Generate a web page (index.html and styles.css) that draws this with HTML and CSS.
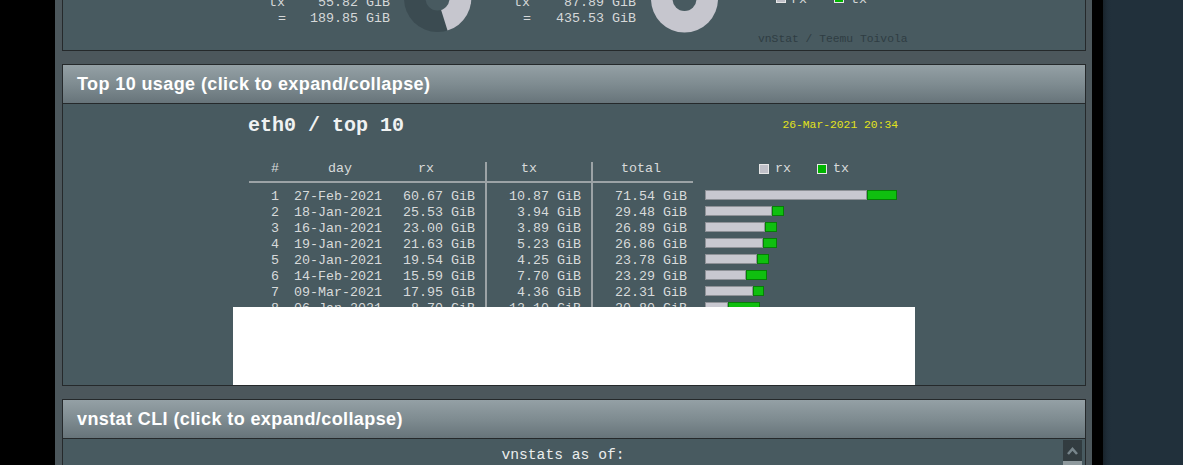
FILE: index.html
```html
<!DOCTYPE html>
<html lang="en">
<head>
<meta charset="utf-8">
<title>vnStat</title>
<link rel="stylesheet" href="styles.css">
</head>
<body>
<div class="frame">
  <div class="gutter"></div>
  <main class="page">
    <section class="panel panel-cut">
      <div class="panel-body body-summary">
        <svg class="summary" width="682" height="50" viewBox="0 0 682 50">
          <g class="sum-text">
            <text x="36" y="6">tx</text>
            <text x="157" y="6" text-anchor="end">55.82 GiB</text>
            <text x="45" y="22">=</text>
            <text x="157" y="22" text-anchor="end">189.85 GiB</text>
            <text x="281" y="6">tx</text>
            <text x="403" y="6" text-anchor="end">87.89 GiB</text>
            <text x="290" y="22">=</text>
            <text x="403" y="22" text-anchor="end">435.53 GiB</text>
            <text x="558" y="3">rx</text>
            <text x="618" y="3">tx</text>
          </g>
          <circle cx="204.5" cy="-1.5" r="33.5" fill="#3b4b51"/>
          <path d="M204.5 -1.5 L198.7 -34.5 A33.5 33.5 0 0 1 214.5 30.5 Z" fill="#c6c6ce"/>
          <circle cx="204.5" cy="-1.5" r="12" fill="#485a60"/>
          <circle cx="451.5" cy="-1" r="33.5" fill="#c6c6ce"/>
          <circle cx="451.5" cy="-1" r="12" fill="#485a60"/>
          <rect x="543.5" y="-6.5" width="9" height="9" fill="#c0c0c8" stroke="#e6e6e6"/>
          <rect x="601.5" y="-6.5" width="9" height="9" fill="#00b400" stroke="#e6e6e6"/>
          <text class="credit" x="525" y="42">vnStat / Teemu Toivola</text>
        </svg>
      </div>
    </section>

    <section class="panel">
      <h2 class="panel-head">Top 10 usage (click to expand/collapse)</h2>
      <div class="panel-body body-top">
        <div class="chart">
          <div class="chart-title">
            <span class="iface">eth0 / top 10</span>
            <span class="stamp">26-Mar-2021 20:34</span>
          </div>
          <div class="trow thead">
            <span class="c-n">#</span>
            <span class="c-day">day</span>
            <span class="c-rx">rx</span>
            <span class="c-tx">tx</span>
            <span class="c-tot">total</span>
            <span class="c-bar legend"><i class="key key-rx"></i>rx<i class="key key-tx"></i>tx</span>
          </div>
          <div class="rule"></div>
          <div class="trow first">
            <span class="c-n">1</span><span class="c-day">27-Feb-2021</span><span class="c-rx">60.67 GiB</span><span class="c-tx">10.87 GiB</span><span class="c-tot">71.54 GiB</span>
            <span class="c-bar"><i class="bar-rx" style="width:162px"></i><i class="bar-tx" style="width:30px"></i></span>
          </div>
          <div class="trow">
            <span class="c-n">2</span><span class="c-day">18-Jan-2021</span><span class="c-rx">25.53 GiB</span><span class="c-tx">3.94 GiB</span><span class="c-tot">29.48 GiB</span>
            <span class="c-bar"><i class="bar-rx" style="width:67px"></i><i class="bar-tx" style="width:12px"></i></span>
          </div>
          <div class="trow">
            <span class="c-n">3</span><span class="c-day">16-Jan-2021</span><span class="c-rx">23.00 GiB</span><span class="c-tx">3.89 GiB</span><span class="c-tot">26.89 GiB</span>
            <span class="c-bar"><i class="bar-rx" style="width:60px"></i><i class="bar-tx" style="width:12px"></i></span>
          </div>
          <div class="trow">
            <span class="c-n">4</span><span class="c-day">19-Jan-2021</span><span class="c-rx">21.63 GiB</span><span class="c-tx">5.23 GiB</span><span class="c-tot">26.86 GiB</span>
            <span class="c-bar"><i class="bar-rx" style="width:58px"></i><i class="bar-tx" style="width:14px"></i></span>
          </div>
          <div class="trow">
            <span class="c-n">5</span><span class="c-day">20-Jan-2021</span><span class="c-rx">19.54 GiB</span><span class="c-tx">4.25 GiB</span><span class="c-tot">23.78 GiB</span>
            <span class="c-bar"><i class="bar-rx" style="width:52px"></i><i class="bar-tx" style="width:12px"></i></span>
          </div>
          <div class="trow">
            <span class="c-n">6</span><span class="c-day">14-Feb-2021</span><span class="c-rx">15.59 GiB</span><span class="c-tx">7.70 GiB</span><span class="c-tot">23.29 GiB</span>
            <span class="c-bar"><i class="bar-rx" style="width:41px"></i><i class="bar-tx" style="width:21px"></i></span>
          </div>
          <div class="trow">
            <span class="c-n">7</span><span class="c-day">09-Mar-2021</span><span class="c-rx">17.95 GiB</span><span class="c-tx">4.36 GiB</span><span class="c-tot">22.31 GiB</span>
            <span class="c-bar"><i class="bar-rx" style="width:48px"></i><i class="bar-tx" style="width:11px"></i></span>
          </div>
          <div class="trow">
            <span class="c-n">8</span><span class="c-day">06-Jan-2021</span><span class="c-rx">8.70 GiB</span><span class="c-tx">12.10 GiB</span><span class="c-tot">20.80 GiB</span>
            <span class="c-bar"><i class="bar-rx" style="width:23px"></i><i class="bar-tx" style="width:32px"></i></span>
          </div>
        </div>
        <div class="unloaded"></div>
      </div>
    </section>

    <section class="panel">
      <h2 class="panel-head">vnstat CLI (click to expand/collapse)</h2>
      <div class="panel-body body-cli">
        <pre class="cli">vnstats as of:</pre>
        <div class="vscroll">
          <div class="vbtn">
            <svg width="11" height="8" viewBox="0 0 11 8"><polyline points="1,7 5.5,2 10,7" fill="none" stroke="#77858b" stroke-width="2.6"/></svg>
          </div>
          <div class="vthumb"></div>
        </div>
      </div>
    </section>
  </main>
  <div class="edge"></div>
  <div class="outside"></div>
</div>
</body>
</html>
```
FILE: styles.css
```css
html, body {
  margin: 0;
  padding: 0;
  height: 465px;
  overflow: hidden;
  background: #000;
}

.frame {
  display: flex;
  height: 465px;
  overflow: hidden;
}

.gutter {
  flex: none;
  width: 55px;
  background: #000;
}

.page {
  flex: none;
  width: 1037px;
  box-sizing: border-box;
  padding: 0 6px 0 7px;
  background: #4c575c;
}

.edge {
  flex: none;
  width: 11px;
  background: #000;
}

.outside {
  flex: 1;
  background: linear-gradient(to right, #18232b 0, #1e2c37 4px, #21303b 8px);
}

.panel {
  border: 1px solid #25292b;
  margin-bottom: 13px;
  background: #485a60;
}

.panel-cut {
  border-top: 0;
}

.panel-head {
  margin: 0;
  height: 38px;
  line-height: 38px;
  padding-left: 14px;
  font-family: "Liberation Sans", Arial, sans-serif;
  font-weight: bold;
  font-size: 18px;
  letter-spacing: 0.4px;
  color: #ffffff;
  background: linear-gradient(to bottom, #94a0a5 0%, #7f8c91 50%, #67747a 100%);
  border-bottom: 1px solid #25292b;
}

.body-summary {
  height: 50px;
  display: flex;
  justify-content: center;
  overflow: hidden;
}

.summary {
  display: block;
  overflow: hidden;
}

.sum-text text {
  font-family: "Liberation Mono", "DejaVu Sans Mono", monospace;
  font-size: 13.33px;
  fill: #d6d8d9;
}

.credit {
  font-family: "Liberation Mono", "DejaVu Sans Mono", monospace;
  font-size: 11.33px;
  fill: #2f3d43;
}

.body-top {
  height: 281px;
  display: flex;
  flex-direction: column;
  align-items: center;
}

.chart {
  width: 682px;
  height: 203px;
  overflow: hidden;
  font-family: "Liberation Mono", "DejaVu Sans Mono", monospace;
  color: #d8dadb;
}

.unloaded {
  width: 682px;
  height: 78px;
  background: #ffffff;
}

.chart-title {
  display: flex;
  justify-content: space-between;
  align-items: flex-start;
  padding: 12px 17px 0 15px;
}

.iface {
  font-weight: bold;
  font-size: 20px;
  line-height: 20px;
  color: #f0f2f2;
}

.stamp {
  font-size: 11.33px;
  line-height: 14px;
  margin-top: 2px;
  color: #e2e21c;
}

.trow {
  display: grid;
  grid-template-columns: 32px 118px 86px 106px 102px 1fr;
  margin-left: 16px;
  font-size: 13.33px;
  line-height: 16px;
  white-space: pre;
}

.trow > span {
  box-sizing: border-box;
}

.thead {
  margin-top: 26px;
  height: 19px;
  line-height: 13px;
}

.rule {
  margin-left: 16px;
  width: 444px;
  height: 2px;
  background: #9ca3a6;
}

.first > span {
  padding-top: 6px;
}

.c-n {
  text-align: right;
  padding-right: 2px;
}

.c-day {
  padding-left: 13px;
}

.c-rx {
  text-align: right;
  padding-right: 10px;
}

.c-tx {
  text-align: right;
  padding-right: 10px;
  border-left: 2px solid #9ca3a6;
}

.c-tot {
  text-align: right;
  padding-right: 6px;
  border-left: 2px solid #9ca3a6;
}

.thead .c-day {
  text-align: center;
  padding-left: 0;
}

.thead .c-rx {
  text-align: center;
  padding-right: 32px;
}

.thead .c-tx {
  text-align: center;
  padding-right: 20px;
}

.thead .c-tot {
  text-align: center;
  padding-right: 4px;
}

.c-bar {
  display: flex;
  align-items: flex-start;
  padding-left: 12px;
}

.legend {
  padding-left: 66px;
}

.key {
  display: block;
  width: 10px;
  height: 10px;
  box-sizing: border-box;
  border: 1px solid #e6e6e6;
  margin-top: 2px;
  margin-right: 6px;
}

.key-rx {
  background: #c0c0c8;
}

.key-tx {
  background: #00b400;
  margin-left: 26px;
}

.bar-rx,
.bar-tx {
  display: block;
  height: 10px;
  margin-top: 1px;
  box-sizing: border-box;
}

.first .bar-rx,
.first .bar-tx {
  margin-top: 1px;
}

.bar-rx {
  background: #c8c8d0;
  border: 1px solid #8e9197;
}

.bar-tx {
  background: #0fbf0f;
  border: 1px solid #067f06;
}

.body-cli {
  display: flex;
  height: 160px;
}

.cli {
  flex: 1;
  margin: 0;
  padding-top: 8px;
  text-align: center;
  font-family: "Liberation Mono", "Courier New", monospace;
  font-size: 14.67px;
  line-height: 17px;
  color: #eceeee;
}

.vscroll {
  flex: none;
  width: 19px;
  margin: 1px 3px 0 0;
  display: flex;
  flex-direction: column;
  background: #2e383c;
}

.vbtn {
  height: 21px;
  background: #323c40;
  display: flex;
  align-items: center;
  justify-content: center;
}

.vbtn svg {
  display: block;
}

.vthumb {
  height: 80px;
  background: #8e999d;
}
```
